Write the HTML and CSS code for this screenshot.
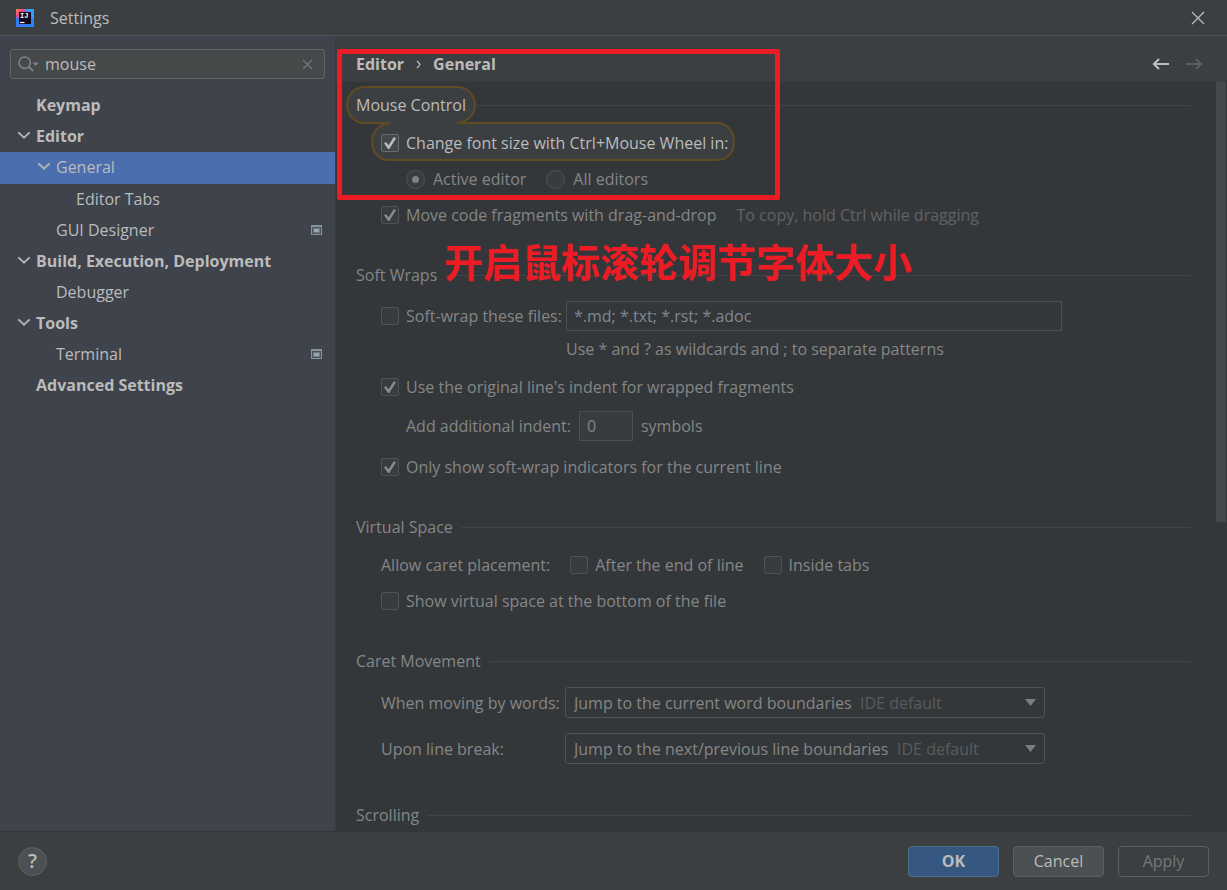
FILE: index.html
```html
<!DOCTYPE html>
<html lang="en">
<head>
<meta charset="utf-8">
<meta name="viewport" content="width=device-width, initial-scale=1">
<title>Settings</title>
<link rel="stylesheet" href="styles.css">
</head>
<body>
<div class="window">
  <header class="titlebar">
    <svg class="app-icon" viewBox="0 0 18 18" aria-hidden="true">
      <defs>
        <linearGradient id="logo" x1="0" y1="0" x2="1" y2="1">
          <stop offset="0" stop-color="#fb8a4a"/>
          <stop offset=".22" stop-color="#f0457f"/>
          <stop offset=".45" stop-color="#4a70f0"/>
          <stop offset="1" stop-color="#1a8cff"/>
        </linearGradient>
      </defs>
      <rect width="18" height="18" fill="url(#logo)"/>
      <path d="M9 0h9v10l-5-5z" fill="#35a0f5"/>
      <path d="M0 8l4 3v7H0z" fill="#2f7df0"/>
      <rect x="3" y="3" width="12" height="12" fill="#12061c"/>
      <text x="4" y="9" class="app-letters">IJ</text>
      <path d="M4 13.500h4.500" stroke="#fff" stroke-width="1.200"/>
    </svg>
    <h1 class="title">Settings</h1>
    <button class="icon-button close" type="button" aria-label="Close">
      <svg width="14" height="14" viewBox="0 0 14 14"><path d="M1 1l12 12M13 1L1 13" stroke="#bbb" stroke-width="1.3"/></svg>
    </button>
  </header>

  <div class="body">
    <aside class="sidebar">
      <div class="search">
        <svg width="21" height="16" viewBox="0 0 21 16" fill="none" aria-hidden="true">
          <circle cx="6.7" cy="6.7" r="5.7" stroke="#7e868c" stroke-width="1.5"/>
          <path d="M11 11l4 4" stroke="#7e868c" stroke-width="1.8"/>
          <path d="M14.500 6.500h6L17.500 10z" fill="#7e868c"/>
        </svg>
        <input class="search-input" type="text" value="mouse" aria-label="Search settings">
        <button class="icon-button" type="button" aria-label="Clear search">
          <svg width="11" height="11" viewBox="0 0 11 11"><path d="M1 1l9 9M10 1l-9 9" stroke="#72777a" stroke-width="1.2"/></svg>
        </button>
      </div>
      <nav class="tree" aria-label="Settings pages">
        <a class="node top" href="#keymap"><span class="twisty"></span>Keymap</a>
        <a class="node top" href="#editor"><span class="twisty open"></span>Editor</a>
        <a class="node level-1 selected" href="#general" aria-current="page"><span class="twisty open"></span>General</a>
        <a class="node level-2" href="#tabs"><span class="twisty"></span>Editor Tabs</a>
        <a class="node level-1" href="#gui"><span class="twisty"></span>GUI Designer
          <svg class="scope" width="11" height="10" viewBox="0 0 11 10"><path d="M0 0h11v10H0z" fill="#87939a"/><path d="M1 2h9v7H1z" fill="#4c535b"/><path d="M2 3h7v5H2z" fill="#6b757d"/><path d="M3 4h5v3H3z" fill="#9aa7b0"/></svg></a>
        <a class="node top" href="#build"><span class="twisty open"></span>Build, Execution, Deployment</a>
        <a class="node level-1" href="#debugger"><span class="twisty"></span>Debugger</a>
        <a class="node top" href="#tools"><span class="twisty open"></span>Tools</a>
        <a class="node level-1" href="#terminal"><span class="twisty"></span>Terminal
          <svg class="scope" width="11" height="10" viewBox="0 0 11 10"><path d="M0 0h11v10H0z" fill="#87939a"/><path d="M1 2h9v7H1z" fill="#4c535b"/><path d="M2 3h7v5H2z" fill="#6b757d"/><path d="M3 4h5v3H3z" fill="#9aa7b0"/></svg></a>
        <a class="node top" href="#advanced"><span class="twisty"></span>Advanced Settings</a>
      </nav>
    </aside>

    <main class="main">
      <div class="crumbs">
        <span>Editor</span>
        <svg width="5" height="9" viewBox="0 0 5 9" fill="none" aria-hidden="true"><path d="M1 1q3 3 3 3.500T1 8" stroke="#bbb" stroke-width="1.300"/></svg>
        <span>General</span>
        <div class="history">
          <button class="icon-button" type="button" aria-label="Back">
            <svg width="17" height="12" viewBox="0 0 17 12" fill="none"><path d="M17 6H2M7 1L2 6l5 5" stroke="#bbb" stroke-width="2.200"/></svg>
          </button>
          <button class="icon-button" type="button" aria-label="Forward" disabled>
            <svg width="17" height="12" viewBox="0 0 17 12" fill="none"><path d="M0 6h15M10 1l5 5-5 5" stroke="#5b5d5e" stroke-width="2.200"/></svg>
          </button>
        </div>
      </div>

      <div class="content">
        <section class="section">
          <svg class="spotlight" width="392" height="78" viewBox="0 0 392 78" aria-hidden="true">
            <path d="M44 38H20C10 38 2 30 2 20S10 2 20 2h92c10 0 18 8 18 18s-8 18-18 18h260c10 0 17 8 17 19s-7 18-17 18H44c-10 0-17-8-17-18S34 38 44 38z" fill="#3c3f41"/>
            <path d="M45 38H20C10 38 2 30 2 20S10 2 20 2h92c10 0 18 8 18 18 0 9-7 17-18 18h260c10 0 17 8 17 19s-7 18-17 18H44c-10 0-17-8-17-18 0-10 7-18 17-19" fill="none" stroke="#614b23" stroke-width="2"/>
          </svg>
          <h2 class="heading bright">Mouse Control</h2>
          <div class="rows">
            <label class="option bright"><input type="checkbox" class="box" checked>Change font size with Ctrl+Mouse Wheel in:</label>
            <div class="row nested radios">
              <label class="option"><input type="radio" class="dot" name="zoom" checked>Active editor</label>
              <label class="option"><input type="radio" class="dot" name="zoom">All editors</label>
            </div>
            <div class="row spread">
              <label class="option"><input type="checkbox" class="box" checked>Move code fragments with drag-and-drop</label>
              <span class="faint">To copy, hold Ctrl while dragging</span>
            </div>
          </div>
        </section>

        <section class="section">
          <h2 class="heading">Soft Wraps</h2>
          <div class="rows wraps">
            <div class="files">
              <label class="option"><input type="checkbox" class="box">Soft-wrap these files:</label>
              <input class="field" type="text" value="*.md; *.txt; *.rst; *.adoc" aria-label="File patterns">
              <span class="hint">Use * and ? as wildcards and ; to separate patterns</span>
            </div>
            <div class="rows">
              <label class="option"><input type="checkbox" class="box" checked>Use the original line's indent for wrapped fragments</label>
              <div class="row nested">
                <label for="indent">Add additional indent:</label>
                <input class="field number" id="indent" type="text" value="0">
                <span>symbols</span>
              </div>
            </div>
            <label class="option"><input type="checkbox" class="box" checked>Only show soft-wrap indicators for the current line</label>
          </div>
        </section>

        <section class="section">
          <h2 class="heading">Virtual Space</h2>
          <div class="rows">
            <div class="row spread">
              <span>Allow caret placement:</span>
              <label class="option"><input type="checkbox" class="box">After the end of line</label>
              <label class="option"><input type="checkbox" class="box">Inside tabs</label>
            </div>
            <label class="option"><input type="checkbox" class="box">Show virtual space at the bottom of the file</label>
          </div>
        </section>

        <section class="section">
          <h2 class="heading">Caret Movement</h2>
          <div class="rows movement">
            <label for="words">When moving by words:</label>
            <div class="combo">
              <select id="words"><option>Jump to the current word boundaries</option></select>
              <span class="fainter">IDE default</span>
              <svg class="arrow" width="11" height="7" viewBox="0 0 11 7"><path d="M0 0h11L5.500 7z" fill="#7a7c7d"/></svg>
            </div>
            <label for="break">Upon line break:</label>
            <div class="combo">
              <select id="break"><option>Jump to the next/previous line boundaries</option></select>
              <span class="fainter">IDE default</span>
              <svg class="arrow" width="11" height="7" viewBox="0 0 11 7"><path d="M0 0h11L5.500 7z" fill="#7a7c7d"/></svg>
            </div>
          </div>
        </section>

        <section class="section">
          <h2 class="heading">Scrolling</h2>
        </section>
        <div class="scroll-thumb"></div>
      </div>

      <div class="callout"></div>
      <p class="callout-text" lang="zh">开启鼠标滚轮调节字体大小</p>
    </main>
  </div>

  <footer class="footer">
    <button class="help" type="button" aria-label="Help">?</button>
    <button class="button primary" type="button">OK</button>
    <button class="button" type="button">Cancel</button>
    <button class="button" type="button" disabled>Apply</button>
  </footer>
</div>
</body>
</html>
```
FILE: styles.css
```css
* { box-sizing: border-box; }

body {
  margin: 0;
  background: #3c3f41;
  color: #bbbbbb;
  font: 16px/24px "Open Sans", "Noto Sans", "Noto Sans CJK SC", sans-serif;
}

input, select, button { font: inherit; color: inherit; }
h1, h2, p { margin: 0; font-size: inherit; font-weight: 400; }
svg { display: block; flex: none; }

.window { display: flex; flex-direction: column; height: 100vh; overflow: hidden; }

.titlebar {
  display: flex;
  align-items: center;
  flex: none;
  height: 36px;
  padding: 0 22px 0 16px;
  border-bottom: 1px solid #515355;
}
.app-icon { width: 18px; height: 18px; margin-right: 16px; }
.app-letters { font: bold 7px "Liberation Mono", monospace; fill: #fff; }
.close { margin-left: auto; }

.icon-button { display: flex; padding: 0; border: 0; background: none; }

.body { display: flex; flex: 1; min-height: 0; }

/* Sidebar */
.sidebar { flex: none; width: 335px; padding-top: 13px; background: #3f434c; }
.search {
  display: flex;
  align-items: center;
  height: 30px;
  margin: 0 10px 11px;
  padding: 0 11px 0 7px;
  border: 1px solid #646464;
  border-radius: 3px;
  background: #45494a;
}
.search-input {
  flex: 1;
  min-width: 0;
  height: 28px;
  padding: 0 6px;
  border: 0;
  outline: 0;
  background: none;
}
.node {
  display: flex;
  align-items: center;
  height: 31px;
  padding: 0 13px 2px 16px;
  color: inherit;
  text-decoration: none;
}
.top { font-weight: 700; }
.level-1 { padding-left: 36px; }
.level-2 { padding-left: 56px; }
.selected { height: 32px; background: #4b6eaf; }
.twisty { flex: none; width: 20px; }
.twisty::before { content: ""; display: block; width: 8px; height: 8px; margin-left: 3px; }
.open::before {
  border: solid #b4b8bc;
  border-width: 0 2px 2px 0;
  transform: translateY(-3px) scale(.9, .8) rotate(45deg);
}
.scope { margin-left: auto; }

/* Page */
.main {
  position: relative;
  display: flex;
  flex: 1;
  flex-direction: column;
  min-width: 0;
  border-left: 1px solid #3a3c3e;
}
.crumbs {
  display: flex;
  align-items: center;
  flex: none;
  gap: 12px;
  height: 45px;
  padding: 11px 24px 0 20px;
  font-weight: 700;
}
.history { display: flex; gap: 17px; margin-left: auto; }

.content {
  position: relative;
  flex: 1;
  min-height: 0;
  overflow: hidden;
  padding: 11px 37px 0 20px;
  border-top: 1px solid #393b3d;
  background: #343739;
  color: #848687;
}
.section { position: relative; margin-bottom: 36px; }
.heading { display: flex; align-items: center; gap: 8px; margin-bottom: 14px; }
.heading::after { content: ""; flex: 1; height: 1px; background: #414446; }
.bright { position: relative; color: #bbbbbb; }
.spotlight { position: absolute; left: -11px; top: -8px; }

.rows { display: flex; flex-direction: column; align-items: stretch; gap: 12px; }
.section > .rows { padding-left: 25px; }
.section > .wraps { gap: 14px; }
.row { display: flex; align-items: center; gap: 8px; }
.nested { padding-left: 25px; }
.spread, .radios { gap: 20px; }
.option { display: flex; align-items: center; gap: 7px; white-space: nowrap; }
.radios .option { gap: 8px; }

.box, .dot {
  appearance: none;
  display: grid;
  place-content: center;
  flex: none;
  width: 18px;
  height: 18px;
  margin: 0;
  border: 1px solid #505355;
  border-radius: 2px;
  background: #393c3e;
}
.bright .box { border-color: #6b6b6b; background: #43494a; }
.box:checked::before {
  content: "";
  width: 12px;
  height: 12px;
  background: #87898a;
  clip-path: polygon(0 52%, 16% 42%, 38% 68%, 82% 0, 100% 10%, 44% 100%, 34% 100%);
}
.bright .box:checked::before { background: #bbbbbb; }
.dot { width: 19px; height: 19px; border-radius: 50%; }
.dot:checked::before {
  content: "";
  width: 7px;
  height: 7px;
  border-radius: 50%;
  background: #7e8081;
}

.faint { color: #606364; }
.fainter { color: #595c5e; }

.files {
  display: grid;
  grid-template-columns: 177px minmax(0, 496px);
  gap: 6px 8px;
}
.field {
  min-width: 0;
  height: 30px;
  padding: 0 7px;
  border: 1px solid #4d5052;
  outline: 0;
  background: #343739;
  color: #7f8993;
}
.number { width: 54px; background: #393c3e; color: #848687; }
.hint { grid-column: 2; white-space: nowrap; }

.section > .movement {
  display: grid;
  grid-template-columns: 176px minmax(0, 480px);
  align-items: center;
  gap: 15px 8px;
  padding-bottom: 3px;
  white-space: nowrap;
}
.combo {
  display: flex;
  align-items: center;
  gap: 8px;
  height: 31px;
  padding: 0 8px;
  border: 1px solid #505355;
  border-radius: 3px;
}
.combo select { appearance: none; padding: 0; border: 0; outline: 0; background: none; }
.arrow { margin-left: auto; }

.scroll-thumb { position: absolute; top: 0; right: 1px; width: 10px; height: 440px; background: #47484b; }

.callout {
  position: absolute;
  left: 1px;
  top: 13px;
  width: 443px;
  height: 151px;
  border: 5px solid #ed1c24;
  border-radius: 2px;
  pointer-events: none;
}
.callout-text {
  position: absolute;
  left: 108px;
  top: 200px;
  color: #ed1c24;
  font: 700 39px/48px "Noto Sans CJK SC", sans-serif;
  white-space: nowrap;
}

/* Footer */
.footer {
  display: flex;
  align-items: center;
  justify-content: flex-end;
  flex: none;
  gap: 14px;
  height: 59px;
  padding: 0 18px;
  border-top: 1px solid #323435;
}
.help {
  width: 29px;
  height: 29px;
  margin-right: auto;
  padding: 0;
  border: 1px solid #5e6163;
  border-radius: 50%;
  background: #4c5052;
  font-size: 20px;
  font-weight: 600;
  line-height: 24px;
}
.button {
  min-width: 91px;
  height: 31px;
  padding: 0 14px;
  border: 1px solid #5e6060;
  border-radius: 4px;
  background: #4c5052;
}
.button:disabled { background: none; color: #777777; }
.primary { border-color: #4c708c; background: #365880; font-weight: 700; }
```
